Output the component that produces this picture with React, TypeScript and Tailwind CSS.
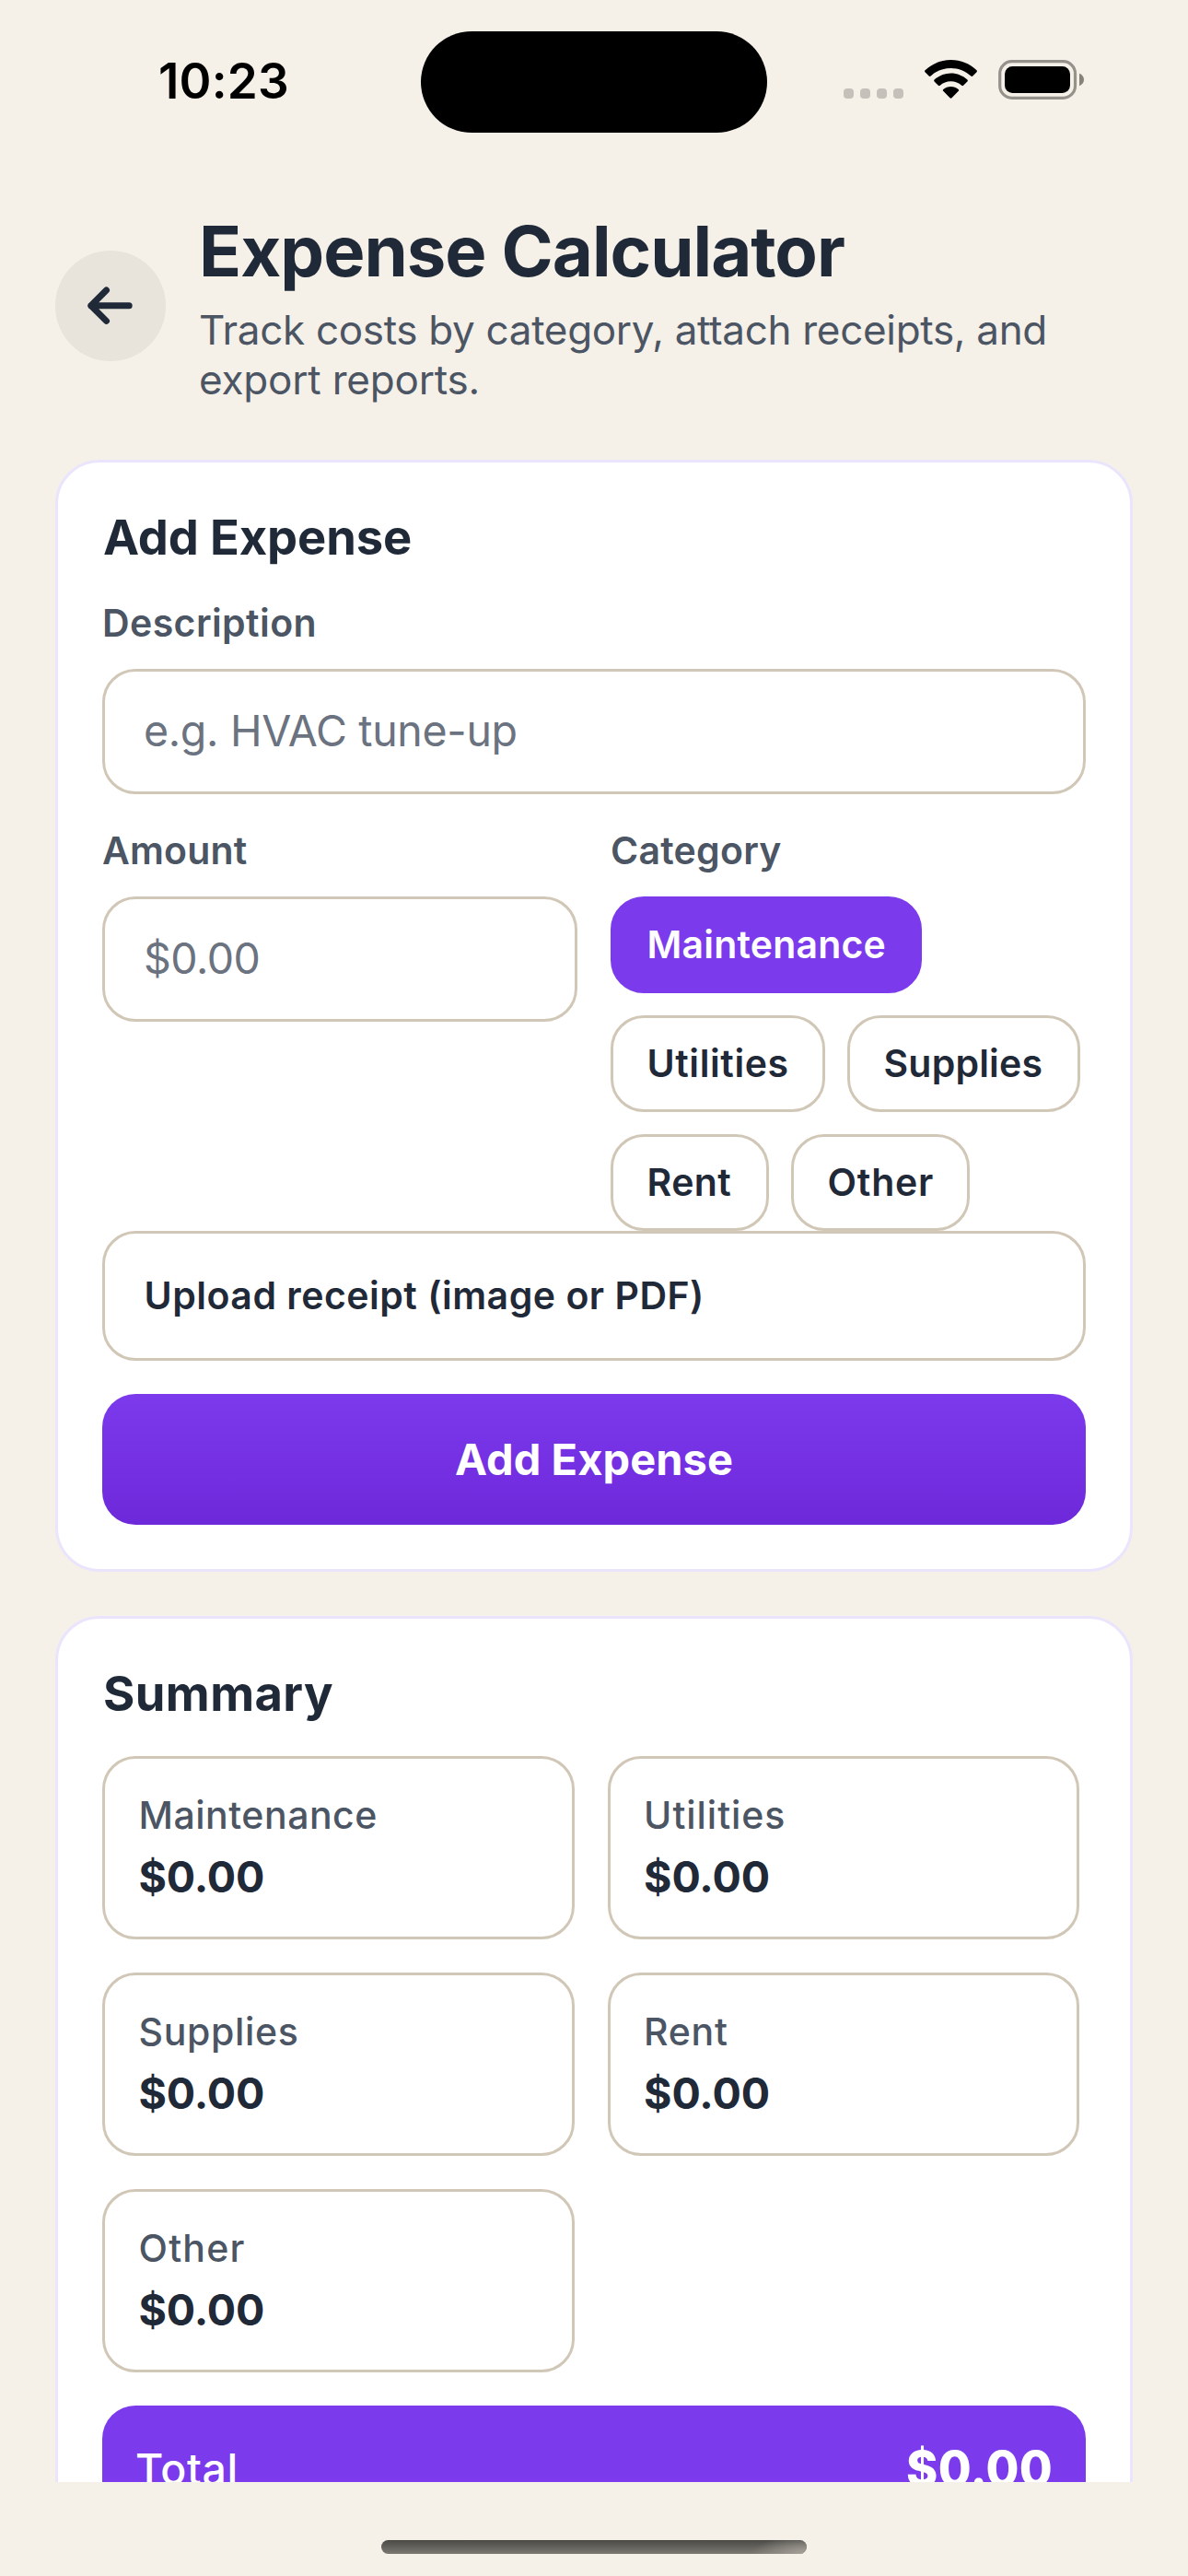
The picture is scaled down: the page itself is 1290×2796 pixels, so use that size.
import React from 'react';

const categories = [
  { name: 'Maintenance', width: 'w-[338px]', active: true, spacing: 'tracking-[0.19px]' },
  { name: 'Utilities', width: 'w-[233px]', active: false, spacing: 'tracking-[0.6px]' },
  { name: 'Supplies', width: 'w-[253px]', active: false, spacing: 'tracking-[0.19px]' },
  { name: 'Rent', width: 'w-[172px]', active: false, spacing: 'tracking-[0.4px]' },
  { name: 'Other', width: 'w-[194px]', active: false, spacing: 'tracking-[0.8px]' },
];

const totals = [
  { name: 'Maintenance', spacing: 'tracking-[0.52px]' },
  { name: 'Utilities', spacing: 'tracking-[0.95px]' },
  { name: 'Supplies', spacing: 'tracking-[0.65px]' },
  { name: 'Rent', spacing: 'tracking-[0.7px]' },
  { name: 'Other', spacing: 'tracking-[1.2px]' },
];

function StatusBar() {
  return (
    <div className="flex h-[177px] shrink-0 items-start">
      <div className="mt-[62px] ml-[172px] w-[285px] text-[53px] leading-[53px] font-semibold tracking-[0.2px] text-black">10:23</div>
      <div className="mt-[34px] h-[110px] w-[376px] rounded-full bg-black" />
      <div className="mt-[96px] ml-[83px] flex gap-[7px]">
        {[0, 1, 2, 3].map((i) => (
          <span key={i} className="h-[11px] w-[11px] rounded-[4px] bg-[#c5c1ba]" />
        ))}
      </div>
      <svg className="mt-[65px] ml-[23px] h-[42px] w-[57px]" viewBox="0 0 57 42">
        <path d="M28.5 0C39.3 0 49.2 4.2 56.5 11.3C57.1 11.9 57.1 12.7 56.5 13.3L52.3 17.5C51.7 18.1 50.9 18.1 50.3 17.5C44.6 12.1 36.9 8.9 28.5 8.9C20.1 8.9 12.4 12.1 6.7 17.5C6.1 18.1 5.3 18.1 4.7 17.5L.5 13.3C-.1 12.7 -.1 11.9 .5 11.3C7.8 4.2 17.7 0 28.5 0Z" />
        <path d="M28.5 14.5C35.4 14.5 41.7 17.2 46.4 21.5C47 22.1 47 22.9 46.4 23.5L42.1 27.8C41.5 28.4 40.8 28.3 40.2 27.8C37.1 25 33 23.3 28.5 23.3C24 23.3 19.9 25 16.8 27.8C16.2 28.3 15.5 28.4 14.9 27.8L10.6 23.5C10 22.9 10 22.1 10.6 21.5C15.3 17.2 21.6 14.5 28.5 14.5Z" />
        <path d="M28.5 29C31.6 29 34.5 30.1 36.7 31.9C37.3 32.4 37.4 33.2 36.8 33.8L29.5 41.2C28.9 41.8 28.1 41.8 27.5 41.2L20.2 33.8C19.6 33.2 19.7 32.4 20.3 31.9C22.5 30.1 25.4 29 28.5 29Z" />
      </svg>
      <svg className="mt-[65px] ml-[23px] h-[43px] w-[94px]" viewBox="0 0 94 43">
        <rect x="1.7" y="1.7" width="81.8" height="39.6" rx="13" fill="none" stroke="#95918b" strokeWidth="3.2" />
        <rect x="7" y="7" width="71" height="29" rx="8.5" fill="#000" />
        <path d="M88 14.8C91.1 16 93 18.4 93 21.5C93 24.6 91.1 27 88 28.2Z" fill="#85827c" />
      </svg>
    </div>
  );
}

function Header() {
  return (
    <header className="mt-[48px] flex items-center gap-[36px]">
      <button className="flex h-[120px] w-[120px] shrink-0 items-center justify-center rounded-full bg-[#e8e4dc]">
        <svg className="h-[60px] w-[60px]" viewBox="0 0 60 60" fill="none" stroke="#1f2937" strokeWidth="7" strokeLinecap="round" strokeLinejoin="round">
          <path d="M25.5 13L8.8 29.7L25.5 46.4M8.8 29.7H50.2" />
        </svg>
      </button>
      <div>
        <h1 className="text-[76px] leading-[94px] font-bold tracking-[-1px] text-[#1f2937]">Expense Calculator</h1>
        <p className="mt-[12px] text-[44px] leading-[54px] tracking-[-0.32px] whitespace-nowrap text-[#4b5563]">
          Track costs by category, attach receipts, and
          <br />
          <span className="tracking-[-0.2px]">export reports.</span>
        </p>
      </div>
    </header>
  );
}

function Card({ title, spacing, children }: { title: string; spacing: string; children: React.ReactNode }) {
  return (
    <section className="rounded-[48px] border-[3px] border-[#ebe4fd] bg-white p-[48px]">
      <h2 className={`pl-px text-[52.5px] leading-[66px] font-bold text-[#1f2937] ${spacing}`}>{title}</h2>
      <div className="mt-[35px]">{children}</div>
    </section>
  );
}

function Field({ label, spacing, children }: { label: string; spacing: string; children: React.ReactNode }) {
  return (
    <div className="flex flex-col gap-[25px]">
      <div className={`text-[41px] leading-[50px] font-semibold text-[#4b5563] ${spacing}`}>{label}</div>
      {children}
    </div>
  );
}

function TextBox({ text, spacing }: { text: string; spacing: string }) {
  return (
    <div className={`flex h-[136px] items-center rounded-[36px] border-[3px] border-[#d1c7b7] pl-[42px] text-[46.5px] text-[#6b7280] ${spacing}`}>
      {text}
    </div>
  );
}

export default function App() {
  return (
    <div className="flex h-[2796px] w-[1290px] flex-col overflow-hidden bg-[#f5f0e8] font-['Inter',sans-serif]">
      <div className="flex h-[2694px] shrink-0 flex-col overflow-hidden">
        <StatusBar />
        <main className="flex flex-col px-[60px]">
          <Header />
          <div className="mt-[60px] flex flex-col gap-[48px]">
            <Card title="Add Expense" spacing="tracking-[-0.15px]">
              <Field label="Description" spacing="tracking-[0.41px]">
                <TextBox text="e.g. HVAC tune-up" spacing="tracking-[-0.32px]" />
              </Field>
              <div className="mt-[36px] grid grid-cols-2 gap-[36px]">
                <Field label="Amount" spacing="tracking-[0.15px]">
                  <TextBox text="$0.00" spacing="tracking-[-0.5px]" />
                </Field>
                <Field label="Category" spacing="tracking-[0.25px]">
                  <div className="flex flex-wrap gap-[24px]">
                    {categories.map((c) => (
                      <button
                        key={c.name}
                        className={`h-[105px] rounded-[36px] border-[3px] pl-[36.5px] text-left text-[41px] font-semibold ${c.width} ${c.spacing} ${
                          c.active ? 'border-[#7c3aed] bg-[#7c3aed] text-white' : 'border-[#d1c7b7] text-[#1f2937]'
                        }`}
                      >
                        {c.name}
                      </button>
                    ))}
                  </div>
                </Field>
              </div>
              <div className="flex h-[141px] items-center rounded-[36px] border-[3px] border-[#d1c7b7] pl-[42.5px] text-[41px] font-semibold tracking-[0.5px] text-[#1f2937]">
                Upload receipt (image or PDF)
              </div>
              <button className="mt-[36px] block h-[142px] w-full rounded-[36px] bg-linear-to-b/srgb from-[#7c3aed] to-[#6d28d9] text-[47px] font-bold tracking-[0.05px] text-white">
                Add Expense
              </button>
            </Card>

            <Card title="Summary" spacing="tracking-[0.4px]">
              <div className="grid grid-cols-[512.6px_512.6px] gap-[36px]">
                {totals.map((t) => (
                  <div key={t.name} className="h-[199px] rounded-[36px] border-[3px] border-[#d1c7b7] p-[36px] pl-[36.5px]">
                    <div className={`text-[41px] leading-[50px] font-medium text-[#4b5563] ${t.spacing}`}>{t.name}</div>
                    <div className="mt-[13px] text-[46.5px] leading-[58px] font-bold tracking-[-0.1px] text-[#1f2937]">$0.00</div>
                  </div>
                ))}
              </div>
              <div className="mt-[36px] flex h-[138px] items-center justify-between rounded-[36px] bg-[#7c3aed] px-[36px] text-white">
                <span className="text-[46.5px] leading-[58px] font-medium tracking-[0.56px]">Total</span>
                <span className="text-[52px] leading-[66px] font-extrabold tracking-[0.3px]">$0.00</span>
              </div>
            </Card>
          </div>
        </main>
      </div>
      <div className="mx-auto mt-[63px] flex h-[15px] w-[462px] shrink-0 justify-end overflow-hidden rounded-full bg-linear-to-b/srgb from-[#4b4a46] to-[#7b7872]">
        <div className="h-full w-[60px] bg-[radial-gradient(ellipse_60px_20px_at_100%_100%,#a8a39b,transparent)]" />
      </div>
    </div>
  );
}
